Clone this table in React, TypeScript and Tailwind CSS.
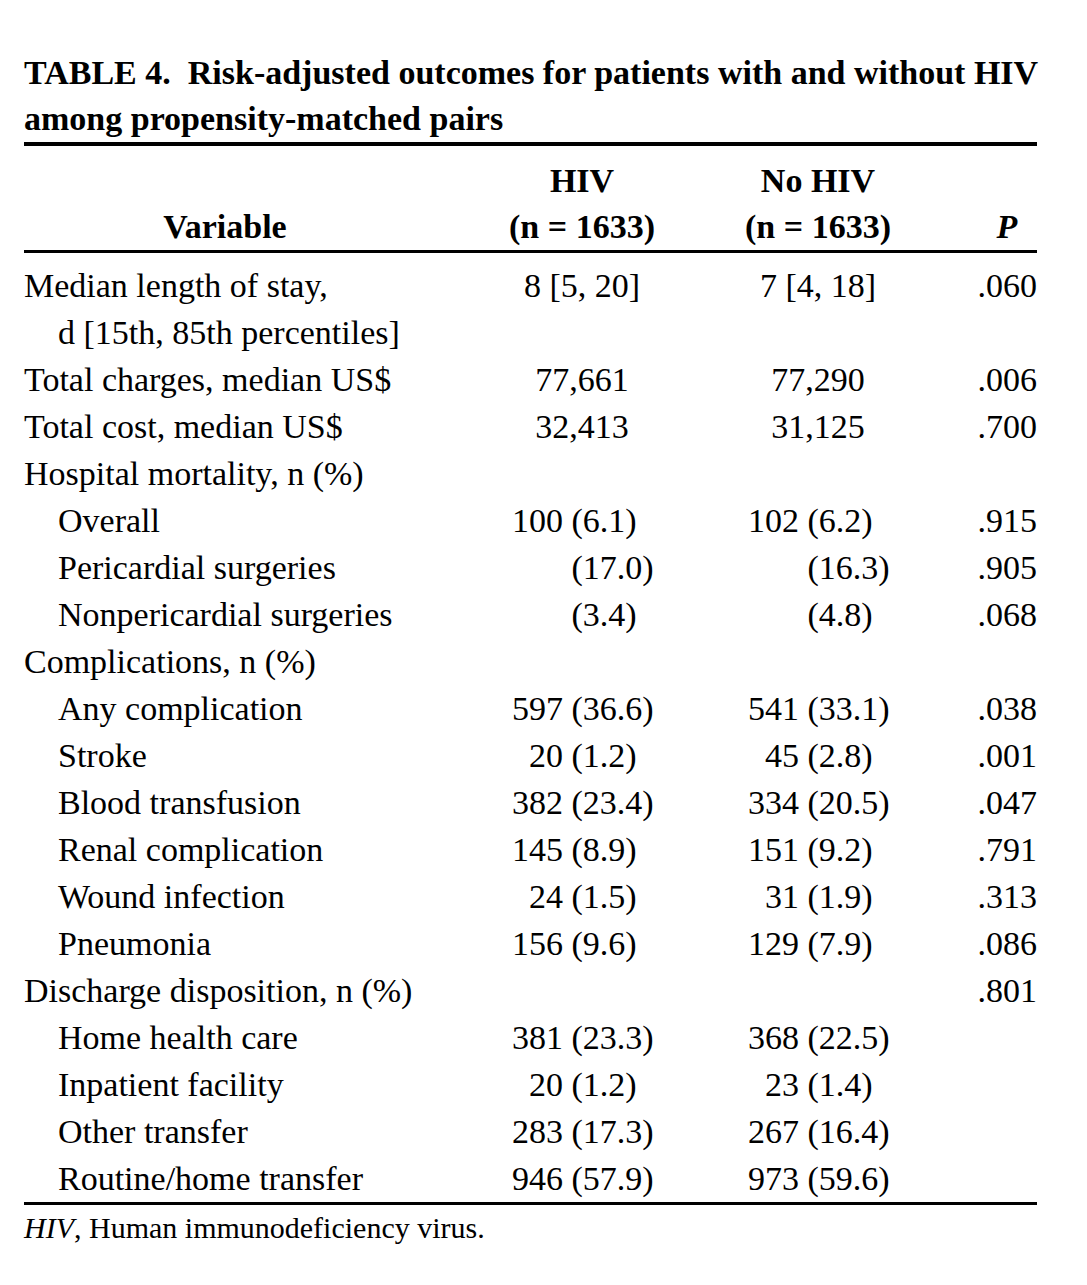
type Cell = string | [string, string] | undefined

type Row = {
    label: string
    label2?: string
    indent?: boolean
    hiv?: Cell
    noHiv?: Cell
    p?: string
}

const rows: Row[] = [
    { label: 'Median length of stay,', label2: 'd [15th, 85th percentiles]', hiv: '8 [5, 20]', noHiv: '7 [4, 18]', p: '.060' },
    { label: 'Total charges, median US$', hiv: '77,661', noHiv: '77,290', p: '.006' },
    { label: 'Total cost, median US$', hiv: '32,413', noHiv: '31,125', p: '.700' },
    { label: 'Hospital mortality, n (%)' },
    { label: 'Overall', indent: true, hiv: ['100', '(6.1)'], noHiv: ['102', '(6.2)'], p: '.915' },
    { label: 'Pericardial surgeries', indent: true, hiv: ['', '(17.0)'], noHiv: ['', '(16.3)'], p: '.905' },
    { label: 'Nonpericardial surgeries', indent: true, hiv: ['', '(3.4)'], noHiv: ['', '(4.8)'], p: '.068' },
    { label: 'Complications, n (%)' },
    { label: 'Any complication', indent: true, hiv: ['597', '(36.6)'], noHiv: ['541', '(33.1)'], p: '.038' },
    { label: 'Stroke', indent: true, hiv: ['20', '(1.2)'], noHiv: ['45', '(2.8)'], p: '.001' },
    { label: 'Blood transfusion', indent: true, hiv: ['382', '(23.4)'], noHiv: ['334', '(20.5)'], p: '.047' },
    { label: 'Renal complication', indent: true, hiv: ['145', '(8.9)'], noHiv: ['151', '(9.2)'], p: '.791' },
    { label: 'Wound infection', indent: true, hiv: ['24', '(1.5)'], noHiv: ['31', '(1.9)'], p: '.313' },
    { label: 'Pneumonia', indent: true, hiv: ['156', '(9.6)'], noHiv: ['129', '(7.9)'], p: '.086' },
    { label: 'Discharge disposition, n (%)', p: '.801' },
    { label: 'Home health care', indent: true, hiv: ['381', '(23.3)'], noHiv: ['368', '(22.5)'] },
    { label: 'Inpatient facility', indent: true, hiv: ['20', '(1.2)'], noHiv: ['23', '(1.4)'] },
    { label: 'Other transfer', indent: true, hiv: ['283', '(17.3)'], noHiv: ['267', '(16.4)'] },
    { label: 'Routine/home transfer', indent: true, hiv: ['946', '(57.9)'], noHiv: ['973', '(59.6)'] },
]

export default function App() {
    return (
        <div className="min-h-screen bg-white text-black font-['Liberation_Serif',serif]">
            <div className="ml-[24px] w-[1013px] pt-[50px]">
                {/* Caption */}
                <h1 className="text-[34px] leading-[46px] font-bold whitespace-nowrap">
                    TABLE 4.&nbsp; Risk-adjusted outcomes for patients with and without HIV
                    <br />
                    among propensity-matched pairs
                </h1>

                {/* Head */}
                <div className="border-t-[4px] border-black pt-[12px] border-b-[3px] text-[34px] leading-[46px] font-bold grid grid-cols-[456px_204px_268px_85px]">
                    <div className="flex flex-col">
                        <span>&nbsp;</span>
                        <span className="w-[402px] text-center">Variable</span>
                    </div>
                    <div className="flex flex-col items-center">
                        <span>HIV</span>
                        <span>(n = 1633)</span>
                    </div>
                    <div className="flex flex-col items-center">
                        <span>No HIV</span>
                        <span>(n = 1633)</span>
                    </div>
                    <div className="flex flex-col items-end">
                        <span>&nbsp;</span>
                        <span className="w-[60px] text-center italic">P</span>
                    </div>
                </div>

                {/* Body */}
                <div className="pt-[9px] border-b-[3px] border-black text-[34px] leading-[47px]">
                    {rows.map(row => (
                        <TableRow key={row.label} row={row} />
                    ))}
                </div>

                <p className="text-[30px] leading-[46px]">
                    <i>HIV</i>, Human immunodeficiency virus.
                </p>
            </div>
        </div>
    )
}

function TableRow({ row }: { row: Row }) {
    return (
        <div className="grid grid-cols-[456px_204px_268px_85px] whitespace-nowrap">
            <div className={row.indent ? 'pl-[34px]' : ''}>
                <div>{row.label}</div>
                {row.label2 && <div className="pl-[34px]">{row.label2}</div>}
            </div>
            <ValueCell cell={row.hiv} numWidth="w-[83px]" />
            <ValueCell cell={row.noHiv} numWidth="w-[115px]" />
            <div className="text-right">{row.p}</div>
        </div>
    )
}

function ValueCell({ cell, numWidth }: { cell: Cell, numWidth: string }) {
    if (!cell) return <div />
    if (typeof cell === 'string') return <div className="text-center">{cell}</div>
    return (
        <div>
            <span className={`inline-block text-right ${numWidth}`}>{cell[0]}</span>
            {' '}
            <span>{cell[1]}</span>
        </div>
    )
}
